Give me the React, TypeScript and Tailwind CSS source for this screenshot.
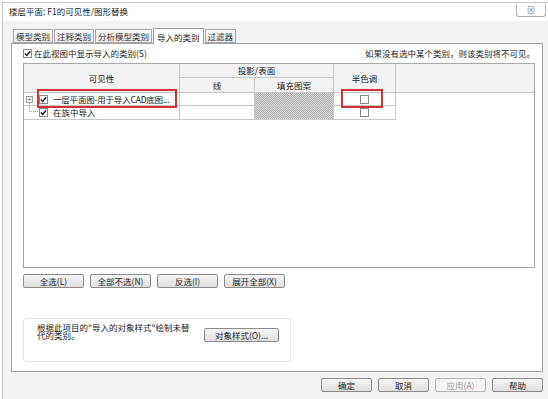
import React from 'react';

const font = { fontFamily: '"Noto Sans CJK SC", "Noto Sans", sans-serif' };

const Check: React.FC<{ checked?: boolean; className?: string }> = ({ checked = true, className = '' }) => (
  <span className={`inline-flex items-center justify-center w-[9px] h-[9px] border border-[#8a8a8a] bg-white shrink-0 ${className}`}>
    {checked && (
      <svg width="7" height="7" viewBox="0 0 7 7">
        <path d="M0.8 3.6 L2.7 5.5 L6.2 1.2" fill="none" stroke="#222" strokeWidth="1.4" />
      </svg>
    )}
  </span>
);

const Btn: React.FC<{ label: string; w: string; disabled?: boolean }> = ({ label, w, disabled }) => (
  <div
    className={`${w} h-[14px] flex items-center justify-center rounded-[2px] border text-[8.5px] leading-none ${
      disabled
        ? 'border-[#b5b5b5] text-[#a0a0a0] bg-[#f4f4f4]'
        : 'border-[#8c8c8c] text-[#222] bg-gradient-to-b from-[#f6f6f6] to-[#dedede]'
    }`}
  >
    {label}
  </div>
);

const tabs = ['模型类别', '注释类别', '分析模型类别', '导入的类别', '过滤器'];

export default function App() {
  return (
    <div style={font} className="w-[548px] h-[399px] bg-white overflow-hidden text-[#222]">
      <div className="ml-[2px] mt-[2px] h-[397px] border-l border-t border-[#c4c4c4] flex flex-col bg-[#f3f3f3]">
        {/* title bar */}
        <div className="h-[18px] flex items-start justify-between bg-white">
          <div className="pl-[6px] pt-[4px] text-[8.5px] leading-none">楼层平面: F1的可见性/图形替换</div>
          <div className="mr-[2px] mt-[1px] w-[30px] h-[13px] border border-[#b0b0b0] border-t-0 rounded-b-[3px] flex items-center justify-center text-[8px] text-[#777] bg-white">
            ⊠
          </div>
        </div>

        <div className="flex-1 flex flex-col pl-[8px] pr-[5px]">
          {/* tabs */}
          <div className="mt-[8px] h-[14px] flex items-end gap-[1px] pl-[2px] relative z-10">
            {tabs.map((t, i) =>
              i === 3 ? (
                <div key={t} className="h-[16px] px-[3px] -mb-px border border-b-0 border-[#a0a0a0] bg-white text-[8.5px] leading-[14px] flex items-start pt-[1px]">
                  {t}
                </div>
              ) : (
                <div key={t} className="h-[14px] px-[2px] border border-[#a8a8a8] bg-gradient-to-b from-[#fafafa] to-[#e8e8e8] text-[8.5px] leading-[12px] text-[#333]">
                  {t}
                </div>
              )
            )}
          </div>

          {/* panel */}
          <div className="h-[329px] border border-[#a0a0a0] bg-white flex flex-col pl-[11px] pr-[7px]">
            <div className="h-[19px] flex items-center justify-between text-[8.5px] leading-none">
              <div className="flex items-center gap-[2px]">
                <Check />
                <span>在此视图中显示导入的类别(S)</span>
              </div>
              <span>如果没有选中某个类别，则该类别将不可见。</span>
            </div>

            {/* table */}
            <div className="h-[205px] border border-[#a8a8a8] bg-white text-[8.5px] leading-none">
              <div className="grid grid-cols-[156px_75px_79px_62px_1fr] grid-rows-[14px_15px_13px_14px]">
                <div className="row-span-2 border-r border-b border-[#c8c8c8] bg-[#f2f2f2] flex items-center justify-center">可见性</div>
                <div className="col-span-2 border-r border-b border-[#c8c8c8] bg-[#f2f2f2] flex items-center justify-center">投影/表面</div>
                <div className="row-span-2 border-r border-b border-[#c8c8c8] bg-[#f2f2f2] flex items-center justify-center">半色调</div>
                <div className="row-span-2 border-b border-[#c8c8c8] bg-[#f2f2f2]" />
                <div className="border-r border-b border-[#c8c8c8] bg-[#f2f2f2] flex items-center justify-center">线</div>
                <div className="border-r border-b border-[#c8c8c8] bg-[#f2f2f2] flex items-center justify-center">填充图案</div>

                {/* row 1 */}
                <div className="relative border-r border-b border-[#c8c8c8] flex items-center">
                  <span className="ml-[2px] w-[7px] h-[7px] border border-[#9a9a9a] flex items-center justify-center text-[7px] leading-none text-[#555]">+</span>
                  <Check className="ml-[6px]" />
                  <span className="ml-[5px] whitespace-nowrap tracking-[-0.2px]">一层平面图-用于导入CAD底图...</span>
                  <div className="absolute left-[13px] right-[2px] top-[-4px] bottom-[-3px] border-2 border-[#d2303a]" />
                </div>
                <div className="border-r border-b border-[#c8c8c8]" />
                <div className="border-r border-b border-[#c8c8c8] bg-[image:repeating-conic-gradient(#adadad_0%_25%,#d8d8d8_0%_50%)] bg-[length:2px_2px]" />
                <div className="relative border-r border-b border-[#c8c8c8] flex items-center justify-center">
                  <span className="w-[9px] h-[9px] border border-[#8a8a8a]" />
                  <div className="absolute left-[7px] right-[12px] top-[-4px] bottom-[-3px] border-2 border-[#d2303a]" />
                </div>
                <div />

                {/* row 2 */}
                <div className="border-r border-b border-[#c8c8c8] flex items-center relative">
                  <div className="absolute left-[5px] top-[-3px] h-[9px] w-[9px] border-l border-b border-dotted border-[#999]" />
                  <Check className="ml-[15px]" />
                  <span className="ml-[5px]">在族中导入</span>
                </div>
                <div className="border-r border-b border-[#c8c8c8]" />
                <div className="border-r border-b border-[#c8c8c8] bg-[image:repeating-conic-gradient(#adadad_0%_25%,#d8d8d8_0%_50%)] bg-[length:2px_2px]" />
                <div className="border-r border-b border-[#c8c8c8] flex items-center justify-center">
                  <span className="w-[9px] h-[9px] border border-[#8a8a8a]" />
                </div>
                <div />
              </div>
            </div>

            {/* select buttons */}
            <div className="mt-[6px] flex gap-[6px]">
              <Btn label="全选(L)" w="w-[61px]" />
              <Btn label="全部不选(N)" w="w-[61px]" />
              <Btn label="反选(I)" w="w-[61px]" />
              <Btn label="展开全部(X)" w="w-[61px]" />
            </div>

            {/* group box */}
            <div className="mt-[30px] w-[268px] h-[44px] border border-[#e0e0e0] rounded-[3px] flex items-start pl-[13px] pr-[11px] pt-[4px]">
              <div className="w-[160px] text-[8.5px] leading-[8px]">根据此项目的"导入的对象样式"绘制未替代的类别。</div>
              <div className="ml-auto mt-[5px]">
                <Btn label="对象样式(O)..." w="w-[75px]" />
              </div>
            </div>
          </div>

          {/* bottom buttons */}
          <div className="mt-[6px] flex justify-end gap-[6px]">
            <Btn label="确定" w="w-[51px]" />
            <Btn label="取消" w="w-[51px]" />
            <Btn label="应用(A)" w="w-[51px]" disabled />
            <Btn label="帮助" w="w-[51px]" />
          </div>
        </div>
      </div>
    </div>
  );
}
